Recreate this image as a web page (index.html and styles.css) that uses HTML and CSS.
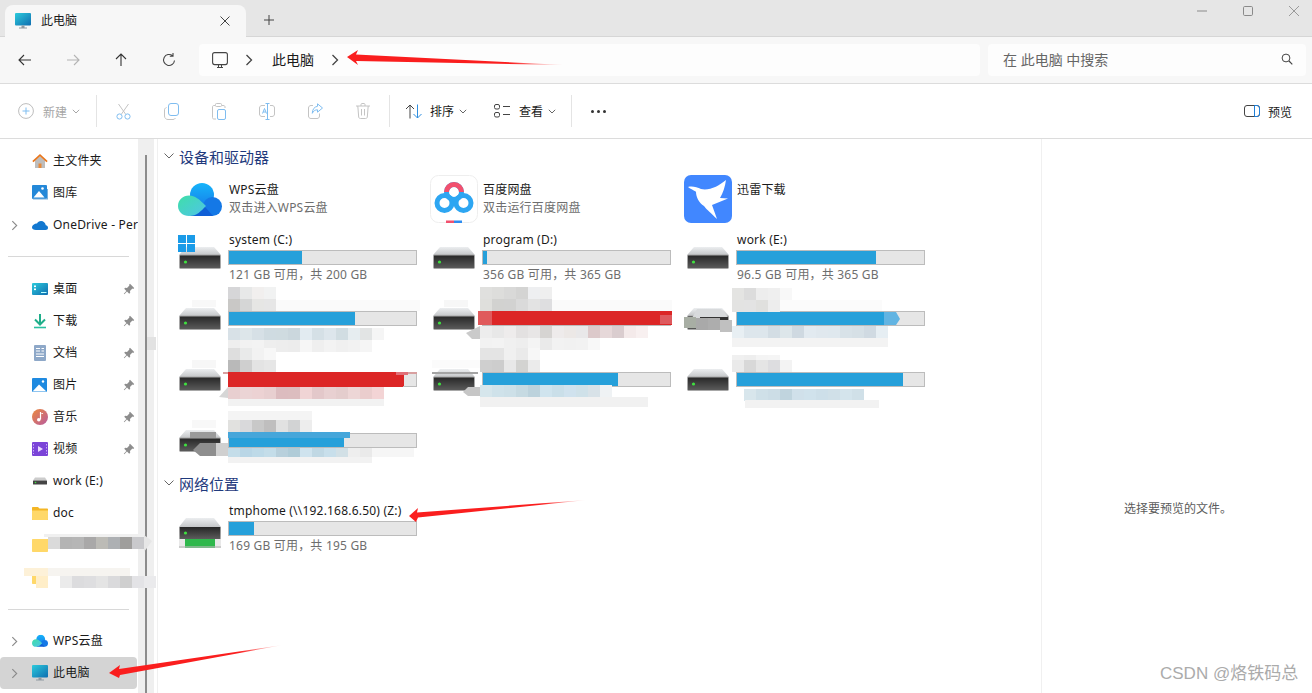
FILE: index.html
```html
<!DOCTYPE html>
<html lang="zh-CN">
<head>
    <meta charset="UTF-8">
    <title>此电脑</title>
    <link rel="stylesheet" href="styles.css">
</head>
<body>
    <svg class="defs" width="0" height="0">
        <defs>
            <linearGradient id="g-top" x1="0" y1="0" x2="0" y2="1"><stop offset="0" stop-color="#eceef0"/><stop offset="1" stop-color="#c4c6c8"/></linearGradient>
            <linearGradient id="g-body" x1="0" y1="0" x2="0" y2="1"><stop offset="0" stop-color="#262626"/><stop offset="1" stop-color="#5c5c5c"/></linearGradient>
            <linearGradient id="g-screen" x1="0" y1="0" x2="1" y2="1"><stop offset="0" stop-color="#2ccbdc"/><stop offset="1" stop-color="#0f6db0"/></linearGradient>
            <linearGradient id="g-cloud" x1="0" y1="0" x2="0" y2="1"><stop offset="0" stop-color="#16b4fa"/><stop offset="1" stop-color="#1680ea"/></linearGradient>
            <linearGradient id="g-teal" x1="0" y1="0" x2="1" y2="1"><stop offset="0" stop-color="#3fdfa8"/><stop offset="1" stop-color="#4fc4e8"/></linearGradient>
            <linearGradient id="g-music" x1="0" y1="0" x2="1" y2="1"><stop offset="0" stop-color="#ec8a3c"/><stop offset="1" stop-color="#b85aa0"/></linearGradient>
            <linearGradient id="g-tail" x1="0" y1="0" x2="1" y2="0"><stop offset="0" stop-color="#fa1e1e"/><stop offset=".75" stop-color="#fa1e1e"/><stop offset="1" stop-color="#fa1e1e" stop-opacity="0"/></linearGradient>

            <symbol id="drive" viewBox="0 0 42 22">
                <path d="M7 0H35L42 8H0Z" fill="url(#g-top)"/>
                <rect x=".5" y="8" width="41" height="13.5" rx="1" fill="url(#g-body)" stroke="#a8a8a8"/>
                <circle cx="6.500" cy="15" r="1.600" fill="#3fe03f"/>
            </symbol>
            <symbol id="pc" viewBox="0 0 16 16">
                <rect x="0" y="0" width="16" height="12.500" rx="1" fill="url(#g-screen)"/>
                <path d="M6.500 12.500H9.500V14.500H12V15.500H4V14.500H6.500Z" fill="#8f9aa2"/>
            </symbol>
            <symbol id="wps" viewBox="0 0 44 34">
                <circle cx="24" cy="12" r="12" fill="url(#g-cloud)"/>
                <circle cx="34.500" cy="23.500" r="9.500" fill="#1478e6"/>
                <path d="M12 33H35L28 25 20 20Z" fill="#0f5fd6"/>
                <path d="M11 12.500C17 12.500 21 16 28 23 23 28 19 33 11 33 5 33 0 29 0 23S5 12.500 11 12.500Z" fill="url(#g-teal)"/>
            </symbol>
            <symbol id="pin" viewBox="0 0 12 12">
                <path d="M7 .8 11.200 5 10.300 5.900 9.400 5.600 7 8 7.200 9.800 6.200 10.800 4 8.600 1.300 11.200.8 10.700 3.400 8 1.200 5.800 2.200 4.800 4 5 6.400 2.600 6.100 1.700Z" fill="#8d8d8d"/>
            </symbol>
            <symbol id="chev" viewBox="0 0 8 12">
                <path d="M1.500 1 6.500 6 1.500 11" fill="none" stroke="currentColor" stroke-width="1.300"/>
            </symbol>
            <symbol id="caret" viewBox="0 0 8 5">
                <path d="M.8.8 4 4 7.200.8" fill="none" stroke="currentColor" stroke-width="1"/>
            </symbol>
            <rect id="c" width="12" height="12"/>
        </defs>
    </svg>

    <div class="window">
        <div class="titlebar">
            <div class="tab">
                <svg class="ic16"><use href="#pc"/></svg>
                <span class="tab-name">此电脑</span>
                <svg class="tab-close" width="10" height="10" viewBox="0 0 10 10"><path d="M.5.5 9.500 9.500M9.500.5.500 9.500" stroke="#444" fill="none"/></svg>
            </div>
            <svg class="tab-add" width="10" height="10" viewBox="0 0 10 10"><path d="M5 0V10M0 5H10" stroke="#444" fill="none"/></svg>
            <div class="win-ctl">
                <svg width="12" height="12" viewBox="0 0 12 12"><path d="M1 6H11" stroke="#8a8a8a" fill="none"/></svg>
                <svg width="12" height="12" viewBox="0 0 12 12"><rect x="1.500" y="1.500" width="9" height="9" rx="1.200" stroke="#8a8a8a" fill="none"/></svg>
                <svg width="12" height="12" viewBox="0 0 12 12"><path d="M1 1 11 11M11 1 1 11" stroke="#9a9a9a" fill="none"/></svg>
            </div>
        </div>

        <div class="addressbar">
            <div class="nav-btns">
                <svg class="nb" viewBox="0 0 16 16"><path d="M14 8H2M7 3 2 8 7 13" stroke="#333" fill="none" stroke-width="1.100"/></svg>
                <svg class="nb" viewBox="0 0 16 16"><path d="M2 8H14M9 3 14 8 9 13" stroke="#b4b4b4" fill="none" stroke-width="1.100"/></svg>
                <svg class="nb" viewBox="0 0 16 16"><path d="M8 14V2M3 7 8 2 13 7" stroke="#333" fill="none" stroke-width="1.100"/></svg>
                <svg class="nb" viewBox="0 0 16 16"><path d="M13.500 8.500A5.500 5.500 0 1 1 11.500 3.700M12 1V4.300H8.800" stroke="#444" fill="none" stroke-width="1.100"/></svg>
            </div>
            <div class="crumbs">
                <svg class="crumb-pc" width="16" height="17" viewBox="0 0 16 17"><rect x=".6" y=".6" width="14.800" height="12" rx="2" stroke="#444" fill="none" stroke-width="1.100"/><path d="M5 15.500H11M6.500 13V15.500M9.500 13V15.500" stroke="#444" fill="none"/></svg>
                <svg class="crumb-sep"><use href="#chev"/></svg>
                <span class="crumb-name">此电脑</span>
                <svg class="crumb-sep"><use href="#chev"/></svg>
            </div>
            <div class="search">
                <span>在 此电脑 中搜索</span>
                <svg width="12" height="12" viewBox="0 0 12 12"><circle cx="5" cy="5" r="3.900" stroke="#444" fill="none"/><path d="M8 8 11.300 11.300" stroke="#444" fill="none" stroke-width="1.200"/></svg>
            </div>
        </div>

        <div class="toolbar">
            <div class="tb-new off">
                <svg width="16" height="16" viewBox="0 0 16 16"><circle cx="8" cy="8" r="7.400" stroke="#bdbdbd" fill="none"/><path d="M8 4.500V11.500M4.500 8H11.500" stroke="#7fbdf0" fill="none"/></svg>
                <span>新建</span>
                <svg class="caret"><use href="#caret"/></svg>
            </div>
            <i class="tb-div"></i>
            <div class="tool">
                <svg width="15" height="17" viewBox="0 0 15 17"><path d="M2.500 1 9.500 11M12.500 1 5.500 11" stroke="#c4c4c4" fill="none"/><circle cx="3.500" cy="13.500" r="2.600" stroke="#7fbdf0" fill="none"/><circle cx="11.500" cy="13.500" r="2.600" stroke="#7fbdf0" fill="none"/></svg>
            </div>
            <div class="tool">
                <svg width="15" height="17" viewBox="0 0 15 17"><rect x="4.500" y=".5" width="10" height="12" rx="2.500" stroke="#7fbdf0" fill="none"/><path d="M2.500 4.500C1 5 .5 6 .5 7V13C.5 15 2 16.500 4 16.500H9C10 16.500 11 16 11.500 15" stroke="#c4c4c4" fill="none"/></svg>
            </div>
            <div class="tool">
                <svg width="14" height="17" viewBox="0 0 14 17"><path d="M3 2.500H2C1 2.500.5 3 .5 4V14.500C.5 15.500 1 16 2 16H4M10 2.500H11C12.500 2.500 13 3 13 4V5" stroke="#c4c4c4" fill="none"/><rect x="3.500" y=".5" width="6" height="3" rx="1" stroke="#c4c4c4" fill="none"/><rect x="5.500" y="6.500" width="8" height="10" rx="1.500" stroke="#7fbdf0" fill="none"/></svg>
            </div>
            <div class="tool">
                <svg width="16" height="17" viewBox="0 0 16 17"><path d="M6 2.500H3C1.500 2.500.5 3.500.5 5V11C.5 12.500 1.500 13.500 3 13.500H6M11 2.500H13C14.500 2.500 15.500 3.500 15.500 5V11C15.500 12.500 14.500 13.500 13 13.500H11" stroke="#c4c4c4" fill="none"/><path d="M8.500.5V16.500M6.500.5H10.500M6.500 16.500H10.500" stroke="#7fbdf0" fill="none"/><path d="M3.500 10.500 5.500 5.500 7.500 10.500M4.200 9H6.800" stroke="#7fbdf0" fill="none"/></svg>
            </div>
            <div class="tool">
                <svg width="15" height="16" viewBox="0 0 15 16"><path d="M5 2.500H3C1.500 2.500.5 3.500.5 5V13C.5 14.500 1.500 15.500 3 15.500H9C10.500 15.500 11.500 14.500 11.500 13V10.500" stroke="#c4c4c4" fill="none"/><path d="M9.500.8 14.500 5 9.500 9.200V6.800C7 6.800 5.300 8 4.300 10.300 4.300 6.500 6.300 3.800 9.500 3.300Z" stroke="#7fbdf0" fill="none"/></svg>
            </div>
            <div class="tool">
                <svg width="14" height="16" viewBox="0 0 14 16"><path d="M0 3H14M5 3V1.500C5 1 5.300.5 6 .5H8C8.700.5 9 1 9 1.500V3M1.800 3 2.700 14C2.800 15 3.500 15.500 4.500 15.500H9.500C10.500 15.500 11.200 15 11.300 14L12.200 3M5.500 6V12.500M8.500 6V12.500" stroke="#c4c4c4" fill="none"/></svg>
            </div>
            <i class="tb-div"></i>
            <div class="tb-menu sort">
                <svg width="18" height="15" viewBox="0 0 18 15"><path d="M5 14.500V1M1 5 5 1 9 5" stroke="#444" fill="none"/><path d="M12.500.5V14M8.500 10 12.500 14 16.500 10" stroke="#2f8fe0" fill="none"/></svg>
                <span>排序</span>
                <svg class="caret"><use href="#caret"/></svg>
            </div>
            <div class="tb-menu view">
                <svg width="16" height="14" viewBox="0 0 16 14"><rect x=".5" y=".5" width="5" height="4.500" rx="1.500" stroke="#444" fill="none"/><rect x=".5" y="8.500" width="5" height="4.500" rx="1.500" stroke="#444" fill="none"/><path d="M9 2.500H16M9 10.500H16" stroke="#444" fill="none"/></svg>
                <span>查看</span>
                <svg class="caret"><use href="#caret"/></svg>
            </div>
            <i class="tb-div"></i>
            <div class="tb-more"><i></i><i></i><i></i></div>
            <div class="tb-preview">
                <svg width="16" height="12" viewBox="0 0 16 12"><rect x=".5" y=".5" width="15" height="11" rx="2.500" stroke="#444" fill="none"/><path d="M10.500.5H13C14.500.5 15.500 1.500 15.500 3V9C15.500 10.500 14.500 11.500 13 11.500H10.500Z" stroke="#1f7fd8" fill="none"/></svg>
                <span>预览</span>
            </div>
        </div>

        <div class="main">
            <nav class="side">
                <div class="side-group">
                    <div class="row">
                        <i class="slot"></i>
                        <svg class="ic16" viewBox="0 0 16 16"><path d="M3 7.500V15H13V7.500L8 3Z" fill="#bdbdbd"/><path d="M6.500 15V10.500H9.500V15Z" fill="#e68a3a"/><path d="M8 1 .3 8 1.500 9.200 8 3.300 14.500 9.200 15.700 8Z" fill="#e8761c"/></svg>
                        <span class="label">主文件夹</span>
                    </div>
                    <div class="row">
                        <i class="slot"></i>
                        <svg class="ic16" viewBox="0 0 16 16"><rect x="0" y="0" width="15" height="14" rx="1" fill="#2488d8"/><path d="M1.500 12.500 7 6 12.500 12.500Z" fill="#fff"/><circle cx="10.500" cy="3.500" r="1.300" fill="#fff"/><path d="M1 14.500H16V4H15V13.500H1Z" fill="#7ab0dc"/></svg>
                        <span class="label">图库</span>
                    </div>
                    <div class="row">
                        <span class="slot"><svg class="chev"><use href="#chev"/></svg></span>
                        <svg class="ic16" viewBox="0 0 16 16"><path d="M4 13H13.500C15 13 16 12 16 10.700 16 9.300 15 8.300 13.800 8.200 13.300 5.800 11.500 4 9 4 7.200 4 5.700 5 5 6.500 2.500 6.500 0 8.200 0 10.500 0 12 1.500 13 4 13Z" fill="#1278d0"/></svg>
                        <span class="label">OneDrive - Per</span>
                    </div>
                </div>
                <hr class="side-line first">
                <div class="side-group">
                    <div class="row">
                        <i class="slot"></i>
                        <svg class="ic16" viewBox="0 0 16 16"><rect y="2" width="16" height="12" rx="1" fill="url(#g-screen)"/><rect x="2" y="4.500" width="2" height="1.600" fill="#fff"/><rect x="2" y="7.500" width="2" height="1.600" fill="#fff"/><path d="M9 11.500H14.500" stroke="#bff" stroke-width="1"/></svg>
                        <span class="label">桌面</span>
                        <svg class="pin"><use href="#pin"/></svg>
                    </div>
                    <div class="row">
                        <i class="slot"></i>
                        <svg class="ic16" viewBox="0 0 16 16"><path d="M8 1V10.500M3 6.500 8 11.500 13 6.500" stroke="#1fae8a" fill="none" stroke-width="2"/><path d="M2 14.500H14" stroke="#2ac0a0" stroke-width="1.600"/></svg>
                        <span class="label">下载</span>
                        <svg class="pin"><use href="#pin"/></svg>
                    </div>
                    <div class="row">
                        <i class="slot"></i>
                        <svg class="ic16" viewBox="0 0 16 16"><rect x="2" y="0" width="12" height="16" rx="1" fill="#8ea8c8"/><path d="M4 3.500H8M4 6H8M9.500 3.500H12M9.500 6H12M4 9H12M4 11.500H12" stroke="#fff" stroke-width="1"/></svg>
                        <span class="label">文档</span>
                        <svg class="pin"><use href="#pin"/></svg>
                    </div>
                    <div class="row">
                        <i class="slot"></i>
                        <svg class="ic16" viewBox="0 0 16 16"><rect y="1" width="15" height="14" rx="1" fill="#1f8ae0"/><path d="M.5 14.500 7 7.500 14.500 14.500Z" fill="#fff"/><circle cx="11" cy="4.500" r="1.200" fill="#fff"/></svg>
                        <span class="label">图片</span>
                        <svg class="pin"><use href="#pin"/></svg>
                    </div>
                    <div class="row">
                        <i class="slot"></i>
                        <svg class="ic16" viewBox="0 0 16 16"><circle cx="8" cy="8" r="8" fill="url(#g-music)"/><path d="M8.500 3V10.500M8.500 3.500 11 4.500" stroke="#fff" fill="none" stroke-width="1.200"/><circle cx="6.800" cy="10.800" r="1.800" fill="#fff"/></svg>
                        <span class="label">音乐</span>
                        <svg class="pin"><use href="#pin"/></svg>
                    </div>
                    <div class="row">
                        <i class="slot"></i>
                        <svg class="ic16" viewBox="0 0 16 16"><rect y="1" width="16" height="14" rx="1" fill="#7b44d8"/><path d="M6 5V11L11 8Z" fill="#e8d8ff"/><path d="M1.500 3V13M14.500 3V13" stroke="#c8a8f8" stroke-dasharray="1.500 1.500"/></svg>
                        <span class="label">视频</span>
                        <svg class="pin"><use href="#pin"/></svg>
                    </div>
                    <div class="row">
                        <i class="slot"></i>
                        <svg class="ic16 drive-mini" viewBox="0 0 16 16"><path d="M3 4.500H13L15 7.500H1Z" fill="#ccc"/><rect x="1" y="7.500" width="14" height="4" rx=".5" fill="#444"/><circle cx="3.500" cy="9.500" r=".8" fill="#3fe03f"/></svg>
                        <span class="label">work (E:)</span>
                    </div>
                    <div class="row">
                        <i class="slot"></i>
                        <svg class="ic16" viewBox="0 0 16 16"><path d="M0 3C0 2.400.4 2 1 2H6L7.500 3.500H15C15.600 3.500 16 3.900 16 4.500V14C16 14.600 15.600 15 15 15H1C.4 15 0 14.600 0 14Z" fill="#f4b625"/><path d="M0 5.500H16V14C16 14.600 15.600 15 15 15H1C.4 15 0 14.600 0 14Z" fill="#ffd869"/></svg>
                        <span class="label">doc</span>
                    </div>
                    <div class="row">
                        <i class="slot"></i>
                        <svg class="ic16" viewBox="0 0 16 16"><path d="M0 3C0 2.400.4 2 1 2H16V14C16 14.600 15.600 15 15 15H1C.4 15 0 14.600 0 14Z" fill="#ffd869"/></svg>
                    </div>
                    <div class="row">
                        <i class="slot"></i>
                        <svg class="ic16" viewBox="0 0 16 16"><path d="M0 5.500H16V14C16 14.600 15.600 15 15 15H1C.4 15 0 14.600 0 14Z" fill="#ffd869"/></svg>
                    </div>
                </div>
                <hr class="side-line second">
                <div class="side-group">
                    <div class="row">
                        <span class="slot"><svg class="chev"><use href="#chev"/></svg></span>
                        <svg class="ic16" viewBox="0 0 44 34"><use href="#wps"/></svg>
                        <span class="label">WPS云盘</span>
                    </div>
                    <div class="row active">
                        <span class="slot"><svg class="chev"><use href="#chev"/></svg></span>
                        <svg class="ic16"><use href="#pc"/></svg>
                        <span class="label">此电脑</span>
                    </div>
                </div>
            </nav>
            <div class="side-scroll"><i class="thumb"></i><i class="notch"></i></div>

            <section class="content">
                <div class="sec-head">
                    <svg width="10" height="6" viewBox="0 0 10 6"><path d="M.5.5 5 5 9.500.5" stroke="#666" fill="none"/></svg>
                    <span>设备和驱动器</span>
                </div>
                <div class="grid">
                    <div class="tile">
                        <div class="tile-ic"><svg class="wps-big" width="44" height="34"><use href="#wps"/></svg></div>
                        <div><div class="name">WPS云盘</div><div class="sub">双击进入WPS云盘</div></div>
                    </div>
                    <div class="tile">
                        <div class="tile-ic baidu">
                            <svg width="48" height="48" viewBox="0 0 48 48">
                                <rect x=".5" y=".5" width="47" height="47" rx="8" fill="#fff" stroke="#eee"/>
                                <circle cx="14.500" cy="28" r="7.500" fill="none" stroke="#2da6f2" stroke-width="5"/>
                                <circle cx="33.500" cy="28" r="7.500" fill="none" stroke="#2da6f2" stroke-width="5"/>
                                <circle cx="24" cy="17" r="7.500" fill="none" stroke="#2da6f2" stroke-width="5"/>
                                <path d="M16.500 17A7.500 7.500 0 0 1 31.500 17" fill="none" stroke="#f2506e" stroke-width="5"/>
                                <rect x="16" y="45.500" width="8" height="2.500" fill="#f2506e"/>
                                <rect x="24" y="45.500" width="8" height="2.500" fill="#2d8cf0"/>
                            </svg>
                        </div>
                        <div><div class="name">百度网盘</div><div class="sub">双击运行百度网盘</div></div>
                    </div>
                    <div class="tile">
                        <div class="tile-ic">
                            <svg width="48" height="48" viewBox="0 0 48 48">
                                <rect width="48" height="48" rx="7" fill="#4187ff"/>
                                <path d="M4 12C8 11 13 12 17 14 25 16 35 11 42 5 41 12 39 18 36 23L44 23.500 28 30 33 44C27 38 23 35 20 31 15 28 12 22 12 16.700 9 15 6 13.500 4 12Z" fill="#fff"/>
                            </svg>
                        </div>
                        <div><div class="name">迅雷下载</div></div>
                    </div>

                    <div class="drive">
                        <svg class="drive-ic"><use href="#drive"/></svg>
                        <svg class="win-logo" width="17" height="17" viewBox="0 0 17 17"><path d="M0 0H8V8H0ZM9 0H17V8H9ZM0 9H8V17H0ZM9 9H17V17H9Z" fill="#1a9be8"/></svg>
                        <div class="drive-text"><div class="name">system (C:)</div><div class="bar"><i style="width:73px"></i></div><div class="sub">121 GB 可用，共 200 GB</div></div>
                    </div>
                    <div class="drive">
                        <svg class="drive-ic"><use href="#drive"/></svg>
                        <div class="drive-text"><div class="name">program (D:)</div><div class="bar"><i style="width:4px"></i></div><div class="sub">356 GB 可用，共 365 GB</div></div>
                    </div>
                    <div class="drive">
                        <svg class="drive-ic"><use href="#drive"/></svg>
                        <div class="drive-text"><div class="name">work (E:)</div><div class="bar"><i style="width:139px"></i></div><div class="sub">96.5 GB 可用，共 365 GB</div></div>
                    </div>

                    <div class="drive">
                        <svg class="drive-ic"><use href="#drive"/></svg>
                        <div class="drive-text"><div class="name"></div><div class="bar"><i style="width:126px"></i></div></div>
                    </div>
                    <div class="drive">
                        <svg class="drive-ic"><use href="#drive"/></svg>
                        <div class="drive-text"><div class="name"></div><div class="bar"><i class="full" style="width:187px"></i></div></div>
                    </div>
                    <div class="drive">
                        <svg class="drive-ic"><use href="#drive"/></svg>
                        <div class="drive-text"><div class="name"></div><div class="bar"><i style="width:152px"></i></div></div>
                    </div>

                    <div class="drive">
                        <svg class="drive-ic"><use href="#drive"/></svg>
                        <div class="drive-text"><div class="name"></div><div class="bar"><i class="full" style="width:175px"></i></div></div>
                    </div>
                    <div class="drive">
                        <svg class="drive-ic"><use href="#drive"/></svg>
                        <div class="drive-text"><div class="name"></div><div class="bar"><i style="width:135px"></i></div></div>
                    </div>
                    <div class="drive">
                        <svg class="drive-ic"><use href="#drive"/></svg>
                        <div class="drive-text"><div class="name"></div><div class="bar"><i style="width:166px"></i></div></div>
                    </div>

                    <div class="drive">
                        <svg class="drive-ic"><use href="#drive"/></svg>
                        <div class="drive-text"><div class="name"></div><div class="bar"><i style="width:115px"></i></div></div>
                    </div>
                </div>

                <div class="sec-head net">
                    <svg width="10" height="6" viewBox="0 0 10 6"><path d="M.5.5 5 5 9.500.5" stroke="#666" fill="none"/></svg>
                    <span>网络位置</span>
                </div>
                <div class="grid">
                    <div class="drive">
                        <svg class="drive-ic net-ic" viewBox="0 0 42 31" width="42" height="31">
                            <path d="M7 0H35L42 9H0Z" fill="url(#g-top)"/>
                            <rect x=".5" y="9" width="41" height="12" fill="url(#g-body)"/>
                            <circle cx="6.500" cy="15" r="1.600" fill="#3fe03f"/>
                            <rect y="21" width="42" height="9" fill="#e8e8e8"/>
                            <rect x="6" y="21" width="30" height="9" fill="#2fb84c"/>
                            <rect y="28" width="42" height="2" fill="#b8b8b8" opacity=".6"/>
                        </svg>
                        <div class="drive-text"><div class="name">tmphome (\\192.168.6.50) (Z:)</div><div class="bar"><i style="width:25px"></i></div><div class="sub">169 GB 可用，共 195 GB</div></div>
                    </div>
                </div>
            </section>

            <aside class="preview">选择要预览的文件。</aside>
        </div>
    </div>

    <!-- mosaic patches and red arrows drawn on top of the screenshot -->
    <svg class="marks" width="1312" height="693" viewBox="0 0 1312 693">
        <!-- nav, hidden folders -->
        <g>
            <rect x="44" y="534" width="100" height="3" fill="#f0f0f0"/>
            <use href="#c" x="48" y="537" fill="#dadada"/><use href="#c" x="60" y="537" fill="#b4b4b4"/><use href="#c" x="72" y="537" fill="#b6b6b6"/><use href="#c" x="84" y="537" fill="#a9a8a8"/><use href="#c" x="96" y="537" fill="#bcbbb6"/><use href="#c" x="108" y="537" fill="#adb0b3"/><use href="#c" x="120" y="537" fill="#9f9e9c"/><use href="#c" x="132" y="537" fill="#c9c9cc"/>
            <path d="M144 535 152 541 144 552Z" fill="#e6e6e6"/>
            <rect x="24" y="568" width="106" height="8" fill="#f6f4f0"/>
            <use href="#c" x="36" y="576" fill="#ffeec8"/><use href="#c" x="60" y="576" fill="#ebebeb"/><use href="#c" x="72" y="576" fill="#dcdcde"/><use href="#c" x="84" y="576" fill="#dedee0"/><use href="#c" x="96" y="576" fill="#e4e4e4"/><use href="#c" x="108" y="576" fill="#dadadc"/><use href="#c" x="120" y="576" fill="#cfcfcf"/><use href="#c" x="132" y="576" fill="#e3e3e6"/><use href="#c" x="144" y="576" fill="#eaeaec"/>
            <rect x="24" y="568" width="24" height="8" fill="#fdf1d8"/>
        </g>
        <!-- drive row 2 -->
        <g>
            <rect x="192" y="300" width="24" height="7" fill="#f8f8f8"/>
            <rect x="276" y="300" width="144" height="11" fill="#fafafa"/>
            <use href="#c" x="228" y="287" fill="#d6d6d8"/><use href="#c" x="240" y="287" fill="#e7e8e8"/><use href="#c" x="252" y="287" fill="#f1efee"/><use href="#c" x="264" y="287" fill="#f1f2f2"/>
            <use href="#c" x="228" y="299" fill="#c9c8c6"/><use href="#c" x="240" y="299" fill="#d5d6d6"/><use href="#c" x="252" y="299" fill="#e6e6e4"/><use href="#c" x="264" y="299" fill="#e6e6e6"/>
            <use href="#c" x="228" y="328" fill="#d8e1e7"/><use href="#c" x="240" y="328" fill="#dde6ea"/><use href="#c" x="252" y="328" fill="#d6e0e6"/><use href="#c" x="264" y="328" fill="#cfdbe1"/><use href="#c" x="276" y="328" fill="#cfdbe0"/><use href="#c" x="288" y="328" fill="#cbd7dd"/><use href="#c" x="300" y="328" fill="#e2ebf1"/><use href="#c" x="312" y="328" fill="#d5e0e6"/><use href="#c" x="324" y="328" fill="#dde6ec"/><use href="#c" x="336" y="328" fill="#d1dde2"/><use href="#c" x="348" y="328" fill="#e6edf0"/><use href="#c" x="360" y="328" fill="#e2e4e4"/><use href="#c" x="372" y="328" fill="#f5f5f5"/>
            <use href="#c" x="228" y="340" fill="#eeeeee"/><use href="#c" x="240" y="340" fill="#f2f2f2"/><use href="#c" x="252" y="340" fill="#f3f3f3"/><use href="#c" x="264" y="340" fill="#eeeeee"/><use href="#c" x="276" y="340" fill="#ededed"/><use href="#c" x="288" y="340" fill="#ececec"/><use href="#c" x="300" y="340" fill="#f6f6f6"/><use href="#c" x="312" y="340" fill="#efefef"/><use href="#c" x="324" y="340" fill="#f3f3f3"/><use href="#c" x="336" y="340" fill="#f0f0f0"/><use href="#c" x="348" y="340" fill="#f2f2f2"/><use href="#c" x="360" y="340" fill="#f5f5f5"/>

            <rect x="444" y="300" width="24" height="7" fill="#f7f7f7"/>
            <rect x="552" y="300" width="120" height="11" fill="#fafafa"/>
            <use href="#c" x="480" y="287" fill="#e0e0de"/><use href="#c" x="492" y="287" fill="#dddddb"/><use href="#c" x="504" y="287" fill="#d9d9d8"/><use href="#c" x="516" y="287" fill="#d4d4d3"/><use href="#c" x="528" y="287" fill="#eeeff1"/><use href="#c" x="540" y="287" fill="#efefef"/>
            <use href="#c" x="480" y="299" fill="#dfdfdc"/><use href="#c" x="492" y="299" fill="#d2d2d0"/><use href="#c" x="504" y="299" fill="#d2d2d1"/><use href="#c" x="516" y="299" fill="#dadada"/><use href="#c" x="528" y="299" fill="#e3e3e3"/><use href="#c" x="540" y="299" fill="#dedee0"/>
            <rect x="478" y="311" width="194" height="14" fill="#dc2626"/>
            <rect x="478" y="311" width="14" height="14" fill="#e05a5c"/><rect x="660" y="315" width="12" height="9" fill="#de5a5e"/>
            <path d="M466 333 480 326V339H472Z" fill="#cacaca"/>
            <use href="#c" x="480" y="326" fill="#ededed"/><use href="#c" x="492" y="326" fill="#e8e8e8"/><use href="#c" x="504" y="326" fill="#eeecec"/><use href="#c" x="516" y="326" fill="#e3e1e1"/><use href="#c" x="528" y="326" fill="#e8e6e6"/><use href="#c" x="540" y="326" fill="#d6d4d2"/><use href="#c" x="552" y="326" fill="#eeebeb"/><use href="#c" x="564" y="326" fill="#ece8e6"/><use href="#c" x="576" y="326" fill="#e9e8e9"/><use href="#c" x="588" y="326" fill="#dcc9ca"/><use href="#c" x="600" y="326" fill="#e6d8d9"/><use href="#c" x="612" y="326" fill="#dacdcf"/><use href="#c" x="624" y="326" fill="#f4eaea"/><use href="#c" x="636" y="326" fill="#f8f0f0"/>
            <use href="#c" x="480" y="338" fill="#f2f2f2"/><use href="#c" x="492" y="338" fill="#f3f3f3"/><use href="#c" x="504" y="338" fill="#f0f0f0"/><use href="#c" x="516" y="338" fill="#eeeeee"/><use href="#c" x="528" y="338" fill="#f4f4f4"/><use href="#c" x="540" y="338" fill="#eaeaea"/><use href="#c" x="552" y="338" fill="#f2f2f2"/><use href="#c" x="564" y="338" fill="#f1f1f1"/><use href="#c" x="576" y="338" fill="#f2f2f2"/><use href="#c" x="588" y="338" fill="#f8f8f8"/>

            <rect x="732" y="300" width="150" height="11" fill="#fbfbfb"/>
            <use href="#c" x="732" y="288" fill="#e4e4e2"/><use href="#c" x="744" y="288" fill="#dcdcdc"/><use href="#c" x="756" y="288" fill="#ededed"/><use href="#c" x="768" y="288" fill="#efefef"/><use href="#c" x="780" y="288" fill="#f8f8f8"/>
            <use href="#c" x="732" y="300" fill="#e3e3e2"/><use href="#c" x="744" y="300" fill="#e3e3e3"/><use href="#c" x="756" y="300" fill="#e0e0de"/><use href="#c" x="768" y="300" fill="#ededed"/>
            <rect x="684" y="300" width="46" height="8" fill="#fff"/>
            <path d="M697 309H721L728 317 721 318H692Z" fill="#d8dadc"/>
            <rect x="700" y="317" width="28" height="2" fill="#333"/>
            <rect x="684" y="317" width="12" height="11" fill="#a8aea4"/><use href="#c" x="696" y="318" fill="#a9a9a9"/><use href="#c" x="708" y="318" fill="#adadad"/><use href="#c" x="720" y="320" fill="#c0c0c0"/>
            <path d="M884 312 896 312 900 319 896 325H884Z" fill="#62b4e2"/>
            <use href="#c" x="732" y="326" fill="#e8eff3"/><use href="#c" x="744" y="326" fill="#dde6ec"/><use href="#c" x="756" y="326" fill="#dde6ec"/><use href="#c" x="768" y="326" fill="#d3dde4"/><use href="#c" x="780" y="326" fill="#dde6ea"/><use href="#c" x="792" y="326" fill="#cfd9e1"/><use href="#c" x="804" y="326" fill="#e2eaf0"/><use href="#c" x="816" y="326" fill="#e0e8ee"/><use href="#c" x="828" y="326" fill="#dfe8ee"/><use href="#c" x="840" y="326" fill="#d8e2e8"/><use href="#c" x="852" y="326" fill="#d6e0e6"/><use href="#c" x="864" y="326" fill="#d0dae2"/><use href="#c" x="876" y="326" fill="#e6eef3"/>
            <rect x="732" y="338" width="156" height="9" fill="#f3f3f3"/>
        </g>
        <!-- drive row 3 -->
        <g>
            <rect x="192" y="360" width="24" height="8" fill="#f7f7f7"/>
            <use href="#c" x="228" y="348" fill="#dedede"/><use href="#c" x="240" y="348" fill="#e9eaea"/><use href="#c" x="252" y="348" fill="#f2f2f2"/><use href="#c" x="264" y="348" fill="#f7f7f7"/>
            <use href="#c" x="228" y="360" fill="#b9b9b9"/><use href="#c" x="240" y="360" fill="#cfcfcf"/><use href="#c" x="252" y="360" fill="#e3e3e3"/><use href="#c" x="264" y="360" fill="#e6e6e6"/>
            <rect x="223" y="372" width="194" height="2" fill="#d8a0a0"/><rect x="228" y="372" width="175" height="15" fill="#dc2626"/><rect x="396" y="372" width="12" height="3" fill="#e07078"/>
            <path d="M219 397 228 387V398Z" fill="#d6d6d6"/>
            <use href="#c" x="228" y="387" fill="#e8cfd0"/><use href="#c" x="240" y="387" fill="#ebd4d5"/><use href="#c" x="252" y="387" fill="#ecd2d3"/><use href="#c" x="264" y="387" fill="#e8cfd0"/><use href="#c" x="276" y="387" fill="#dcbcbf"/><use href="#c" x="288" y="387" fill="#dcbdbf"/><use href="#c" x="300" y="387" fill="#f0d4d5"/><use href="#c" x="312" y="387" fill="#e3c8ca"/><use href="#c" x="324" y="387" fill="#e8d0d1"/><use href="#c" x="336" y="387" fill="#e4cdcd"/><use href="#c" x="348" y="387" fill="#edd6d6"/><use href="#c" x="360" y="387" fill="#eacdcd"/><use href="#c" x="372" y="387" fill="#f3d4d5"/>
            <rect x="228" y="399" width="156" height="7" fill="#f2f2f2"/>

            <rect x="432" y="360" width="48" height="8" fill="#fbfbfb"/>
            <rect x="432" y="372" width="48" height="2" fill="#a4a4a4"/>
            <use href="#c" x="480" y="348" fill="#e4e4e4"/><use href="#c" x="492" y="348" fill="#e4e4e4"/><use href="#c" x="504" y="348" fill="#f0f0f0"/><use href="#c" x="516" y="348" fill="#eaeaea"/><use href="#c" x="528" y="348" fill="#f7f7f7"/>
            <use href="#c" x="480" y="360" fill="#cfcfcf"/><use href="#c" x="492" y="360" fill="#cdcdcd"/><use href="#c" x="504" y="360" fill="#e8e8e8"/><use href="#c" x="516" y="360" fill="#d3d3d1"/><use href="#c" x="528" y="360" fill="#ebebeb"/>
            <rect x="478" y="372" width="4" height="15" fill="#fff"/>
            <path d="M463 392 468 387H480V396H468Z" fill="#c6c6c6"/>
            <use href="#c" x="480" y="385" fill="#d6e6ec"/><use href="#c" x="492" y="385" fill="#cfe2ea"/><use href="#c" x="504" y="385" fill="#cde0e8"/><use href="#c" x="516" y="385" fill="#c6dae2"/><use href="#c" x="528" y="385" fill="#bcd2dc"/><use href="#c" x="540" y="385" fill="#d0e4ee"/><use href="#c" x="552" y="385" fill="#cadfe9"/><use href="#c" x="564" y="385" fill="#d0e2ee"/><use href="#c" x="576" y="385" fill="#cfe1e9"/><use href="#c" x="588" y="385" fill="#d8e2e8"/><use href="#c" x="600" y="385" fill="#eff2f4"/>
            <rect x="480" y="397" width="168" height="10" fill="#f1f1f1"/>

            <use href="#c" x="732" y="355" fill="#f0f0f0"/><use href="#c" x="744" y="355" fill="#eeeeee"/><use href="#c" x="756" y="355" fill="#f4f4f4"/><use href="#c" x="768" y="355" fill="#f5f5f5"/>
            <use href="#c" x="732" y="360" fill="#eaeaea"/><use href="#c" x="744" y="360" fill="#d8d8d8"/><use href="#c" x="756" y="360" fill="#e5e5e5"/><use href="#c" x="768" y="360" fill="#dddde0"/><use href="#c" x="780" y="360" fill="#f3f3f3"/>
            <use href="#c" x="744" y="389" fill="#d8e6ec"/><use href="#c" x="756" y="389" fill="#cfe0e8"/><use href="#c" x="768" y="389" fill="#ccdde6"/><use href="#c" x="780" y="389" fill="#c0d4de"/><use href="#c" x="792" y="389" fill="#d0e0ea"/><use href="#c" x="804" y="389" fill="#d0e2ec"/><use href="#c" x="816" y="389" fill="#cddfe9"/><use href="#c" x="828" y="389" fill="#d0e0e8"/><use href="#c" x="840" y="389" fill="#d4e4ec"/><use href="#c" x="852" y="389" fill="#d0e0e8"/>
            <rect x="745" y="400" width="134" height="8" fill="#f2f2f2"/>
        </g>
        <!-- drive row 4 -->
        <g>
            <rect x="192" y="420" width="24" height="8" fill="#f8f8f8"/>
            <rect x="228" y="411" width="84" height="9" fill="#f4f4f4"/>
            <use href="#c" x="228" y="420" fill="#e1e1df"/><use href="#c" x="240" y="420" fill="#d9d9db"/><use href="#c" x="252" y="420" fill="#c8c8c8"/><use href="#c" x="264" y="420" fill="#bfbebe"/><use href="#c" x="276" y="420" fill="#e1e1e1"/><use href="#c" x="288" y="420" fill="#d2d3d4"/><use href="#c" x="300" y="420" fill="#ededed"/>
            <rect x="190" y="432" width="26" height="6" fill="#9a9a9a"/>
            <rect x="228" y="432" width="122" height="6" fill="#46a6da"/>
            <path d="M193 450 200 443H216V456H200Z" fill="#8e8e8e"/><rect x="216" y="443" width="12" height="13" fill="#d0d0d0"/>
            <use href="#c" x="228" y="448" fill="#c4dde9"/><use href="#c" x="240" y="448" fill="#b9d6e6"/><use href="#c" x="252" y="448" fill="#bedae8"/><use href="#c" x="264" y="448" fill="#c4dde9"/><use href="#c" x="276" y="448" fill="#b8d0dc"/><use href="#c" x="288" y="448" fill="#b0ccd8"/><use href="#c" x="300" y="448" fill="#cfe3ee"/><use href="#c" x="312" y="448" fill="#c0d8e4"/><use href="#c" x="324" y="448" fill="#c8dfeb"/><use href="#c" x="336" y="448" fill="#d2e0e6"/><use href="#c" x="348" y="448" fill="#eeeeee"/><use href="#c" x="360" y="448" fill="#eaeaea"/>
            <rect x="372" y="448" width="42" height="9" fill="#f6f6f6"/>
            <rect x="228" y="457" width="144" height="6" fill="#f2f2f2"/>
        </g>
        <!-- arrows -->
        <path d="M347 57 358 50 356 54.500 565 65 356 61 358 65Z" fill="url(#g-tail)"/>
        <path d="M409 516 418 508 417 512.500 587 500 418 517.500 416 522Z" fill="url(#g-tail)"/>
        <path d="M109 673 120 665 119 669 283 645 120 675 119 678Z" fill="url(#g-tail)"/>
    </svg>

    <div class="watermark">CSDN @烙铁码总</div>
</body>
</html>
```

FILE: styles.css
```css
* { margin: 0; padding: 0; box-sizing: border-box; }

html, body {
    width: 1312px;
    height: 693px;
    overflow: hidden;
    background: #fff;
}

body {
    position: relative;
    font-family: "Noto Sans", "Noto Sans CJK SC", sans-serif;
    font-size: 12px;
    color: #1a1a1a;
}

.defs { position: absolute; }

.window {
    display: flex;
    flex-direction: column;
    height: 693px;
}

svg { display: block; flex: none; }
i { display: block; }

.ic16 { width: 16px; height: 16px; }

/* title bar */
.titlebar {
    display: flex;
    align-items: flex-start;
    height: 37px;
    background: #e6e6e6;
    border-bottom: 1px solid #d6d6d6;
}

.tab {
    display: flex;
    align-items: center;
    width: 241px;
    height: 32px;
    margin: 5px 0 0 5px;
    padding: 0 0 0 10px;
    background: #f7f7f7;
    border-radius: 8px 8px 0 0;
}

.tab-name {
    margin-left: 10px;
    font-size: 12px;
    line-height: 16px;
}

.tab-close { margin-left: 143px; }

.tab-add { margin: 15px 0 0 18px; }

.win-ctl {
    display: flex;
    gap: 34px;
    margin: 5px 12px 0 auto;
}

/* address row */
.addressbar {
    display: flex;
    align-items: center;
    height: 47px;
    background: #f7f7f7;
    border-bottom: 1px solid #dcdcdc;
}

.nav-btns {
    display: flex;
    gap: 32px;
    width: 199px;
    padding-left: 17px;
}

.nb { width: 16px; height: 16px; }

.crumbs {
    display: flex;
    align-items: center;
    width: 781px;
    height: 32px;
    padding-left: 13px;
    background: #fdfdfd;
    border-radius: 4px;
    font-size: 14px;
}

.crumb-sep {
    width: 8px;
    height: 12px;
    margin: 0 0 0 17px;
    color: #444;
}

.crumb-name {
    margin-left: 19px;
    line-height: 20px;
}

.search {
    display: flex;
    align-items: center;
    justify-content: space-between;
    width: 318px;
    height: 32px;
    margin-left: 8px;
    padding: 0 13px 2px 15px;
    background: #fdfdfd;
    border-radius: 4px;
    font-size: 14px;
    color: #666;
}

/* command bar */
.toolbar {
    display: flex;
    align-items: center;
    height: 55px;
    background: #fff;
    border-bottom: 1px solid #dcdcdc;
}

.tb-new {
    display: flex;
    align-items: center;
    width: 96px;
    padding-left: 18px;
}

.tb-new span { margin: 2px 0 0 9px; color: #a6a6a6; }

.caret { width: 8px; height: 5px; margin-left: 5px; color: #666; }
.off .caret { color: #a6a6a6; }

.tb-div {
    width: 1px;
    height: 32px;
    background: #e4e4e4;
}

.toolbar > .tb-div:nth-of-type(1) { margin-right: 2px; }

.tool {
    display: flex;
    align-items: center;
    justify-content: center;
    width: 48px;
}

.tool + .tb-div { margin-left: 2px; }

.tb-menu {
    display: flex;
    align-items: center;
}

.tb-menu span { margin: 2px 0 0 7px; line-height: 16px; }

.sort { margin-left: 15px; }
.view { margin-left: 27px; }
.view span { margin-left: 9px; }
.view + .tb-div { margin-left: 15px; }

.tb-more {
    display: flex;
    gap: 3px;
    margin-left: 19px;
}

.tb-more i {
    width: 3px;
    height: 3px;
    background: #333;
    border-radius: 50%;
}

.tb-preview {
    display: flex;
    align-items: center;
    gap: 8px;
    margin-left: auto;
    padding-right: 20px;
}

.tb-preview span { margin-top: 2px; }

/* main area */
.main {
    display: flex;
    flex: 1;
    min-height: 0;
}

.side {
    width: 138px;
    padding-top: 6px;
    background: #fff;
}

.row {
    display: flex;
    align-items: center;
    height: 32px;
    overflow: hidden;
    white-space: nowrap;
}

.slot {
    display: block;
    flex: none;
    width: 32px;
    padding-left: 11px;
}

.chev { width: 7px; height: 11px; color: #8a8a8a; }

.label {
    margin-left: 5px;
    line-height: 16px;
    letter-spacing: .2px;
}

.pin {
    width: 12px;
    height: 12px;
    margin-left: auto;
    margin-right: 3px;
}

.active {
    margin-right: 1px;
    background: #d4d4d4;
    border-radius: 4px;
}

.side-line {
    height: 1px;
    border: 0;
    background: #d8d8d8;
    margin: 0 9px 0 8px;
}

.side-line.first { margin-top: 15px; margin-bottom: 16px; }
.side-line.second { margin-top: 16px; margin-bottom: 15px; }

.side-scroll {
    position: relative;
    width: 16px;
    background: #efefef;
}

.thumb {
    position: absolute;
    left: 7px;
    top: 16px;
    bottom: 0;
    width: 2px;
    background: #8c8c8c;
}

.notch {
    position: absolute;
    left: 9px;
    top: 198px;
    width: 9px;
    height: 13px;
    background: #e2e2e2;
}

.content {
    flex: none;
    width: 884px;
    padding: 7px 0 0 18px;
    margin-left: 3px;
    border-left: 1px solid #f0f0f0;
}

.sec-head {
    display: flex;
    align-items: center;
    gap: 5px;
    height: 20px;
    margin-left: -12px;
    margin-bottom: 9px;
    font-size: 15px;
    color: #1f3a7d;
}

.sec-head.net { margin-top: 2px; margin-bottom: 10px; }

.grid {
    display: grid;
    grid-template-columns: repeat(3, 254px);
    row-gap: 5px;
}

.tile {
    display: flex;
    gap: 4px;
    height: 52px;
}

.tile .name { margin-top: 7px; line-height: 16px; }
.tile .sub { margin-top: 2px; line-height: 16px; }

.tile-ic { display: flex; align-items: center; justify-content: center; width: 48px; height: 48px; }

.wps-big { width: 44px; height: 34px; margin-top: 1px; }

.drive {
    position: relative;
    display: flex;
    height: 56px;
}

.drive-ic {
    width: 42px;
    height: 22px;
    margin: 15px 7px 0 3px;
}

.net-ic { height: 31px; }

.win-logo {
    position: absolute;
    left: 2px;
    top: 3px;
}

.drive-text { width: 189px; }

.name {
    height: 16px;
    padding-left: 1px;
    line-height: 16px;
    letter-spacing: .2px;
    white-space: nowrap;
}

.sub {
    padding-left: 1px;
    margin-top: 2px;
    line-height: 16px;
    letter-spacing: .2px;
    color: #6e6e6e;
}

.bar {
    height: 15px;
    margin-top: 2px;
    background: #e6e6e6;
    border: 1px solid #bcbcbc;
}

.bar i {
    height: 100%;
    background: #26a0da;
}

.bar i.full { background: #da2626; }

.preview {
    flex: 1;
    display: flex;
    align-items: center;
    justify-content: center;
    padding: 183px 0 0 2px;
    border-left: 1px solid #f0f0f0;
    color: #5c5c5c;
}

/* overlays */
.marks {
    position: absolute;
    left: 0;
    top: 0;
    pointer-events: none;
}

.watermark {
    position: absolute;
    left: 1160px;
    top: 663px;
    font-family: "Liberation Sans", "Noto Sans CJK SC", sans-serif;
    font-size: 17px;
    line-height: 22px;
    color: #ababab;
    white-space: nowrap;
}
```
